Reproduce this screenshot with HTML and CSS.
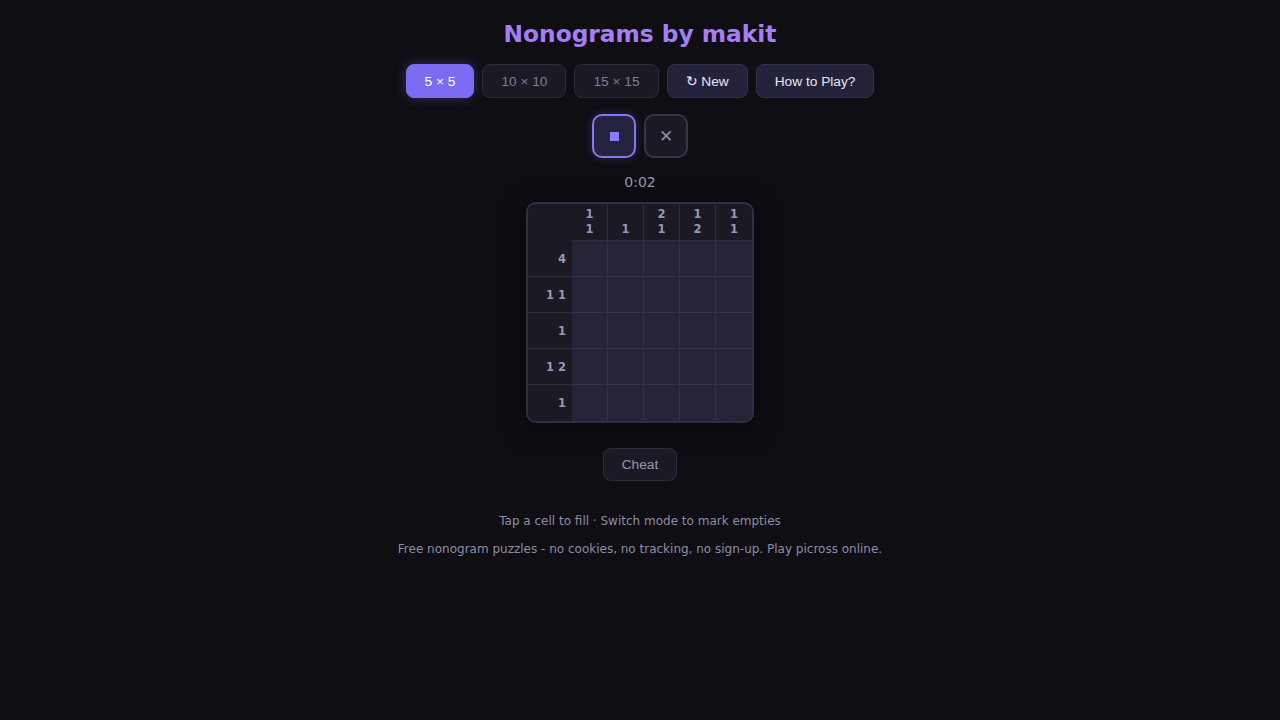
FILE: index.html
```html
<!DOCTYPE html>
<html>
<head>
<meta charset="utf-8">
<link rel="stylesheet" href="styles.css">
</head>
<body>
<main class="app">
  <h1 class="title">Nonograms by makit</h1>
  <div class="toolbar">
    <button class="btn btn-active">5 × 5</button>
    <button class="btn btn-dim">10 × 10</button>
    <button class="btn btn-dim">15 × 15</button>
    <button class="btn btn-light">↻ New</button>
    <button class="btn btn-light">How to Play?</button>
  </div>
  <div class="modes">
    <button class="mode mode-on"><span class="sq"></span></button>
    <button class="mode">✕</button>
  </div>
  <div class="timer">0:02</div>
  <div class="board">
    <div class="corner"></div>
    <div class="colclue"><span>1</span><span>1</span></div>
    <div class="colclue"><span>1</span></div>
    <div class="colclue"><span>2</span><span>1</span></div>
    <div class="colclue"><span>1</span><span>2</span></div>
    <div class="colclue last"><span>1</span><span>1</span></div>

    <div class="rowclue">4</div>
    <div class="cell"></div><div class="cell"></div><div class="cell"></div><div class="cell"></div><div class="cell last"></div>
    <div class="rowclue">1 1</div>
    <div class="cell"></div><div class="cell"></div><div class="cell"></div><div class="cell"></div><div class="cell last"></div>
    <div class="rowclue">1</div>
    <div class="cell"></div><div class="cell"></div><div class="cell"></div><div class="cell"></div><div class="cell last"></div>
    <div class="rowclue">1 2</div>
    <div class="cell"></div><div class="cell"></div><div class="cell"></div><div class="cell"></div><div class="cell last"></div>
    <div class="rowclue bottom">1</div>
    <div class="cell bottom"></div><div class="cell bottom"></div><div class="cell bottom"></div><div class="cell bottom"></div><div class="cell bottom last"></div>
  </div>
  <button class="cheat">Cheat</button>
  <p class="hint">Tap a cell to fill · Switch mode to mark empties</p>
  <p class="about">Free nonogram puzzles - no cookies, no tracking, no sign-up. Play picross online.</p>
</main>
</body>
</html>
```

FILE: styles.css
```css
html, body {
  margin: 0;
  padding: 0;
  background: #0f0e13;
  height: 100%;
}
body {
  font-family: "DejaVu Sans", sans-serif;
  color: #e6e4f0;
}
.app {
  display: flex;
  flex-direction: column;
  align-items: center;
  padding-top: 19px;
}
.title {
  margin: 0;
  font-size: 23.3px;
  font-weight: bold;
  color: #a57ef6;
  line-height: 29px;
}
.toolbar {
  display: flex;
  gap: 8px;
  margin-top: 16px;
}
.btn {
  font-family: "Liberation Sans", Arial, sans-serif;
  font-size: 13.7px;
  height: 34px;
  border-radius: 8px;
  border: 1px solid #2c2b3c;
  background: #1b1a24;
  color: #7f7d92;
  padding: 0 18px;
  cursor: pointer;
}
.btn-active {
  background: #7b6cf2;
  border-color: #7b6cf2;
  color: #ffffff;
  box-shadow: 0 0 12px rgba(123, 108, 242, 0.35);
}
.btn-light {
  background: #23223a;
  border-color: #33324a;
  color: #e8e6f4;
}
.modes {
  display: flex;
  gap: 8px;
  margin-top: 16px;
}
.mode {
  width: 44px;
  height: 44px;
  border-radius: 10px;
  border: 2px solid #35344a;
  background: #1b1a24;
  color: #8e8ca4;
  font-size: 17px;
  font-family: "DejaVu Sans", sans-serif;
  display: flex;
  align-items: center;
  justify-content: center;
  padding: 0;
}
.mode-on {
  border-color: #8a74f5;
  background: #242340;
  box-shadow: 0 0 10px rgba(138, 116, 245, 0.25);
}
.sq {
  width: 9px;
  height: 9px;
  background: #8a7bfa;
  display: block;
}
.timer {
  margin-top: 16px;
  font-size: 14px;
  color: #9c9ab2;
  line-height: 16px;
}
.board {
  margin-top: 12px;
  display: grid;
  grid-template-columns: 44px repeat(5, 36px);
  grid-template-rows: 37px repeat(5, 36px);
  border: 2px solid #2f2e42;
  border-radius: 10px;
  overflow: hidden;
  background: #1b1a24;
  box-shadow: 0 4px 28px rgba(0, 0, 0, 0.6);
}
.corner {
  background: #1b1a24;
}
.colclue {
  background: #1b1a24;
  border-right: 1px solid #2d2c3e;
  border-bottom: 1px solid #2d2c3e;
  display: flex;
  flex-direction: column;
  justify-content: flex-end;
  align-items: center;
  padding-bottom: 4px;
  font-size: 11.5px;
  font-weight: bold;
  line-height: 14.5px;
  color: #9896b4;
}
.rowclue {
  background: #1b1a24;
  border-bottom: 1px solid #2d2c3e;
  display: flex;
  align-items: center;
  justify-content: flex-end;
  padding-right: 6px;
  font-size: 11.5px;
  font-weight: bold;
  color: #9896b4;
}
.cell {
  background: #242338;
  border-right: 1px solid #32314a;
  border-bottom: 1px solid #32314a;
}
.last {
  border-right: none;
}
.bottom {
  border-bottom: none;
}
.cheat {
  margin-top: 25px;
  font-family: "Liberation Sans", Arial, sans-serif;
  font-size: 13.7px;
  height: 33px;
  width: 74px;
  border-radius: 8px;
  border: 1px solid #2c2b3c;
  background: #1b1a24;
  color: #9896ac;
  padding: 0;
}
.hint {
  margin: 32px 0 0;
  font-size: 12px;
  line-height: 16px;
  color: #8e8ca6;
}
.about {
  margin: 12px 0 0;
  font-size: 12px;
  line-height: 16px;
  color: #8e8ca6;
}
```
